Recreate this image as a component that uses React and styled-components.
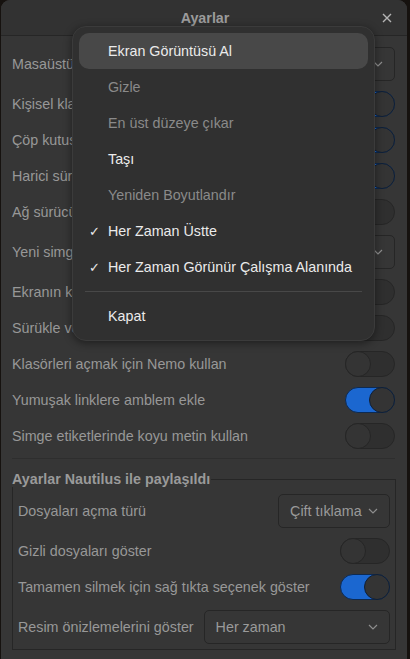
import styled, { createGlobalStyle } from "styled-components";

const GlobalStyle = createGlobalStyle`
  html, body {
    margin: 0;
    padding: 0;
    background: #16120f;
  }
  body {
    font-family: "Liberation Sans", Arial, sans-serif;
    font-size: 14.3px;
  }
`;

const mainRows = [
  { label: "Masaüstü simgelerinin boyutu", type: "select", value: "Normal" },
  { label: "Kişisel klasörü göster", type: "toggle", on: true },
  { label: "Çöp kutusunu göster", type: "toggle", on: true },
  { label: "Harici sürücüleri göster", type: "toggle", on: true },
  { label: "Ağ sürücülerini göster", type: "toggle", on: false },
  { label: "Yeni simgeleri yerleştir", type: "select", value: "Sol üst" },
  { label: "Ekranın kenarlarına hizala", type: "toggle", on: false },
  { label: "Sürükle ve bırak ile kopyala", type: "toggle", on: false },
  { label: "Klasörleri açmak için Nemo kullan", type: "toggle", on: false },
  { label: "Yumuşak linklere amblem ekle", type: "toggle", on: true },
  { label: "Simge etiketlerinde koyu metin kullan", type: "toggle", on: false },
];

const sharedRows = [
  { label: "Dosyaları açma türü", type: "select", value: "Çift tıklama" },
  { label: "Gizli dosyaları göster", type: "toggle", on: false },
  { label: "Tamamen silmek için sağ tıkta seçenek göster", type: "toggle", on: true },
  { label: "Resim önizlemelerini göster", type: "select", value: "Her zaman", wide: true },
];

const menuItems = [
  { text: "Ekran Görüntüsü Al", active: true },
  { text: "Gizle", disabled: true },
  { text: "En üst düzeye çıkar", disabled: true },
  { text: "Taşı" },
  { text: "Yeniden Boyutlandır", disabled: true },
  { text: "Her Zaman Üstte", checked: true },
  { text: "Her Zaman Görünür Çalışma Alanında", checked: true },
  { separator: true },
  { text: "Kapat" },
];

function Chevron() {
  return (
    <svg width="10" height="6" viewBox="0 0 10 6">
      <path d="M1 1l4 4 4-4" fill="none" stroke="#8e8e8e" strokeWidth="1.2" />
    </svg>
  );
}

function SettingRow({ row }) {
  return (
    <Row>
      <Label>{row.label}</Label>
      {row.type === "toggle" ? (
        <Toggle $on={row.on}>
          <Knob $on={row.on} />
        </Toggle>
      ) : (
        <Select $wide={row.wide}>
          <span>{row.value}</span>
          <Chevron />
        </Select>
      )}
    </Row>
  );
}

export default function App() {
  return (
    <>
      <GlobalStyle />
      <Window>
        <Header>
          <Title>Ayarlar</Title>
          <CloseButton>
            <svg width="10" height="10" viewBox="0 0 10 10">
              <path d="M1 1l8 8M9 1l-8 8" stroke="#b4b4b4" strokeWidth="1.4" />
            </svg>
          </CloseButton>
        </Header>
        <Content>
          <List>
            {mainRows.map((r) => (
              <SettingRow key={r.label} row={r} />
            ))}
          </List>
          <Divider />
          <Group>
            <Legend>Ayarlar Nautilus ile paylaşıldı</Legend>
            <List>
              {sharedRows.map((r) => (
                <SettingRow key={r.label} row={r} />
              ))}
            </List>
          </Group>
        </Content>

        <Menu>
          {menuItems.map((m, i) =>
            m.separator ? (
              <MenuSeparator key={i} />
            ) : (
              <MenuItem key={i} $active={m.active} $disabled={m.disabled}>
                <Check>{m.checked ? "✓" : ""}</Check>
                {m.text}
              </MenuItem>
            )
          )}
        </Menu>
      </Window>
    </>
  );
}

const Window = styled.div`
  position: relative;
  width: 406px;
  height: 659px;
  margin-left: 1px;
  background: #363636;
  border-radius: 9px 9px 0 0;
  overflow: hidden;
  color: #9a9a9a;
`;

const Header = styled.div`
  height: 35px;
  border-bottom: 1px solid #262626;
  background: #323232;
  display: flex;
  align-items: center;
  justify-content: center;
  position: relative;
`;

const Title = styled.div`
  font-weight: bold;
  font-size: 14.3px;
  color: #9c9c9c;
  margin-left: 2px;
`;

const CloseButton = styled.div`
  position: absolute;
  right: 15px;
  top: 13px;
  display: flex;
`;

const Content = styled.div`
  padding: 11px 12px 0 11px;
`;

const List = styled.div`
  display: flex;
  flex-direction: column;
  gap: 10px;
`;

const Row = styled.div`
  display: flex;
  align-items: center;
  justify-content: space-between;
  gap: 10px;
`;

const Label = styled.div`
  white-space: nowrap;
  color: #989898;
`;

const Toggle = styled.div`
  box-sizing: border-box;
  width: 50px;
  height: 26px;
  border-radius: 13px;
  flex-shrink: 0;
  display: flex;
  justify-content: ${(p) => (p.$on ? "flex-end" : "flex-start")};
  background: ${(p) => (p.$on ? "#1b67d0" : "#2f2f2f")};
  border: 1px solid ${(p) => (p.$on ? "#0d2a52" : "#262626")};
`;

const Knob = styled.div`
  box-sizing: border-box;
  width: 26px;
  height: 26px;
  margin: -1px;
  border-radius: 50%;
  background: #343434;
  border: 1px solid ${(p) => (p.$on ? "#0f1f36" : "#262626")};
`;

const Select = styled.div`
  box-sizing: border-box;
  height: 34px;
  width: ${(p) => (p.$wide ? "186px" : "auto")};
  flex-shrink: 0;
  border: 1px solid #262626;
  border-radius: 5px;
  display: flex;
  align-items: center;
  justify-content: space-between;
  gap: 6px;
  padding: 0 11px 0 11px;
  color: #9a9a9a;
`;

const Divider = styled.div`
  height: 1px;
  background: #2e2e2e;
  margin: 9px 0 12px;
`;

const Group = styled.fieldset`
  margin: 0;
  padding: 7px 5px 5px 5px;
  border: 1px solid #262626;
`;

const Legend = styled.legend`
  padding: 0 1px 0 0;
  margin-left: -6px;
  font-weight: bold;
  color: #9a9a9a;
`;

const Menu = styled.div`
  position: absolute;
  left: 71px;
  top: 26px;
  width: 303px;
  box-sizing: border-box;
  padding: 6px 6px 6px 6px;
  background: #303030;
  border: 1px solid #3b3b3b;
  border-radius: 14px;
  box-shadow: 0 2px 8px rgba(0, 0, 0, 0.45);
  display: flex;
  flex-direction: column;
`;

const MenuItem = styled.div`
  height: 36px;
  display: flex;
  align-items: center;
  border-radius: 10px;
  padding-left: 10px;
  background: ${(p) => (p.$active ? "#484848" : "transparent")};
  color: ${(p) => (p.$disabled ? "#8a8a8a" : "#ebebeb")};
  white-space: nowrap;
`;

const Check = styled.span`
  width: 19px;
  flex-shrink: 0;
  font-size: 13px;
  color: #ebebeb;
`;

const MenuSeparator = styled.div`
  height: 1px;
  background: #484848;
  margin: 6px 6px 6px 6px;
`;
